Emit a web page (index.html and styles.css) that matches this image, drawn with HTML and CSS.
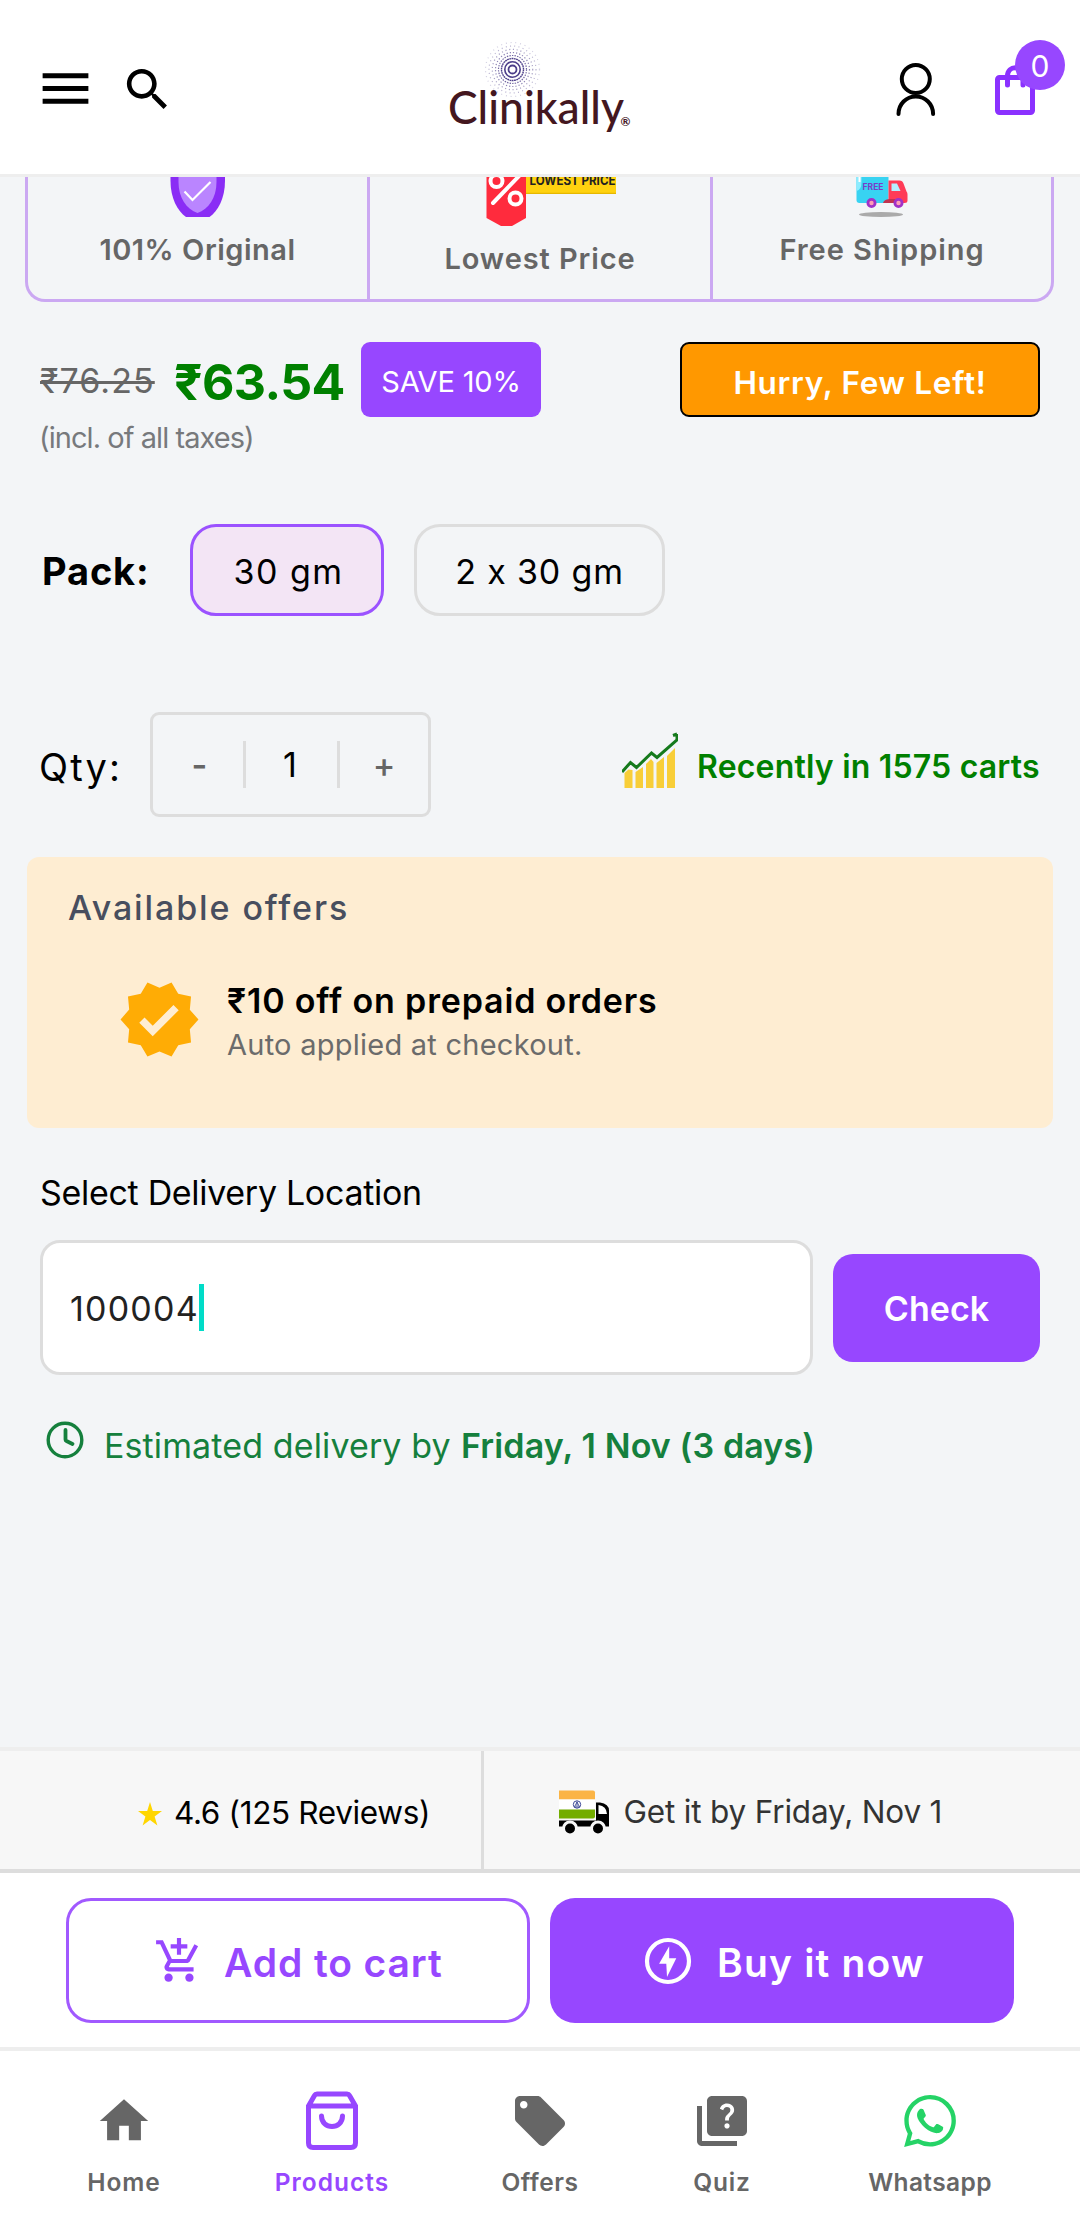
FILE: index.html
```
<!DOCTYPE html>
<html lang="en">
<head>
<meta charset="utf-8">
<title>Clinikally</title>
<link rel="stylesheet" href="styles.css">
</head>
<body>
<header class="header">
  <svg class="menu" width="61" height="61" viewBox="0 0 24 24"><path d="M3 18h18v-2H3v2zm0-5h18v-2H3v2zm0-7v2h18V6H3z"/></svg>
  <svg class="search" width="55" height="55" viewBox="0 0 24 24"><path d="M15.5 14h-.79l-.28-.27C15.41 12.59 16 11.11 16 9.5 16 5.91 13.09 3 9.5 3S3 5.91 3 9.5 5.91 16 9.5 16c1.61 0 3.09-.59 4.23-1.57l.27.28v.79l5 4.99L20.49 19l-4.99-5zm-6 0C7.01 14 5 11.99 5 9.5S7.01 5 9.5 5 14 7.01 14 9.5 11.99 14 9.5 14z"/></svg>
  <svg class="logo" width="190" height="110" viewBox="440 35 190 110">
    <g fill="none" stroke="#4d3f8a">
      <circle cx="512.5" cy="69.5" r="4" stroke-width="1.8"/>
      <circle cx="512.5" cy="69.5" r="7.7" stroke-width="1.6"/>
      <circle cx="512.5" cy="69.5" r="11" stroke-width="1.4" stroke-dasharray="1.8 .5"/>
      <circle cx="512.5" cy="69.5" r="14" stroke-width="1.2" stroke-dasharray="1.4 1.2" opacity=".8"/>
      <circle cx="512.5" cy="69.5" r="17" stroke-width="1.2" stroke-dasharray="1.2 2" opacity=".65"/>
      <circle cx="512.5" cy="69.5" r="20.2" stroke-width="1.2" stroke-dasharray="1.1 2.7" opacity=".5"/>
      <circle cx="512.5" cy="69.5" r="23.5" stroke-width="1.2" stroke-dasharray="1 3.3" opacity=".4"/>
      <circle cx="512.5" cy="69.5" r="27" stroke-width="1.2" stroke-dasharray="1 3.8" opacity=".25"/>
    </g>
    <text class="brand" x="448" y="124" textLength="176" lengthAdjust="spacingAndGlyphs">Clinikally</text>
    <text class="reg" x="620.5" y="125.5">®</text>
  </svg>
  <svg class="user" width="44" height="60" viewBox="893 60 44 60" fill="none" stroke="#000" stroke-width="4" stroke-linecap="round"><circle cx="914.8" cy="79" r="14"/><path d="M897.5 114c0-10 7.800-17.500 17.300-17.500s17.300 7.500 17.300 17.500"/></svg>
  <div class="bag">
    <svg width="44" height="60" viewBox="993 60 44 60" fill="none" stroke="#8b31ff" stroke-width="5" stroke-linecap="round"><rect x="997.500" y="77.500" width="35" height="35" rx="2"/><path d="M1007.500 85v-9c0-11 15.500-11 15.500 0v9"/></svg>
    <span class="count">0</span>
  </div>
</header>

<main class="main">
  <section class="features">
    <div class="feature">
      <svg width="56" height="40" viewBox="171 177 56 40"><path d="M171.500 177h54.500v4c0 17-7 30-15.500 36h-23.500c-8.500-6-15.500-19-15.500-36z" fill="#8a2df5"/><path d="M179.500 177h38v5c0 16-8 27-19 31-11-4-19-15-19-31z" fill="#ba85ff"/><path d="M185.500 191.500l8 8.500 18-18" fill="none" stroke="#fff" stroke-width="2.200"/></svg>
      <p class="f1">101% Original</p>
    </div>
    <div class="feature">
      <svg class="tag" width="132" height="49" viewBox="487 177 132 49"><path d="M527 177h91v17h-91z" fill="#ffd20f"/><path d="M527 192.700h91v1.300h-91z" fill="#e6b800"/><path d="M488.500 177h39.500v41l-14 8h-11l-14.500-8z" fill="#ff2b3d"/><g fill="none" stroke="#fff" stroke-width="4"><circle cx="498.500" cy="181" r="6"/><circle cx="517.500" cy="198.500" r="6"/><path d="M495 203l27-28" stroke-linecap="round"/></g><text class="lowtag" x="531.500" y="184.800" textLength="86" lengthAdjust="spacingAndGlyphs">LOWEST PRICE</text></svg>
      <p class="f2">Lowest Price</p>
    </div>
    <div class="feature">
      <svg class="van" width="54" height="40" viewBox="857 177 54 40"><path d="M858.500 177h32v26h-29q-3 0-3-3z" fill="#38d3f2"/><path d="M858.500 177h5v5q0 8-5 9z" fill="#8cecff"/><path d="M860.500 177h2v5h-2z" fill="#fff"/><path d="M890.500 180.500h11q3 0 4 3l3 8q1 1 1 3v6q0 2.500-3 2.500h-16z" fill="#ff3b57"/><path d="M885 203c1-4 6-4 9-4h4v4z" fill="#c2334f"/><path d="M893.500 183.500h5.500l3.500 7.500h-9z" fill="#b5efff"/><g fill="#ff9eb5" stroke="#a032c8" stroke-width="2.800"><circle cx="873.500" cy="203" r="3.600"/><circle cx="900.500" cy="203" r="3.600"/></g><ellipse cx="883" cy="214.500" rx="22" ry="2.500" fill="#aaa"/><text class="free" x="864.500" y="190" textLength="21">FREE</text></svg>
      <p class="f3">Free Shipping</p>
    </div>
  </section>

  <section class="prices">
    <s class="mrp">₹76.25</s>
    <strong class="price">₹63.54</strong>
    <span class="save">SAVE 10%</span>
    <span class="hurry">Hurry, Few Left!</span>
  </section>
  <p class="tax">(incl. of all taxes)</p>

  <section class="pack">
    <span class="pack-label">Pack:</span>
    <button class="chip chip-on">30 gm</button>
    <button class="chip chip-off">2 x 30 gm</button>
  </section>

  <section class="qty">
    <span class="qty-label">Qty:</span>
    <div class="stepper"><span class="minus">-</span><span class="num">1</span><span class="plus">+</span></div>
    <svg class="trend" width="56" height="57" viewBox="622 731 56 57"><path d="M624.500 773l4-3.500 4 .5v18h-8zM635.500 772l7.500-5v21h-7.500zM646 764l5-5 2.500 3v26H646zM656.500 763l7.500-6v31h-7.500zM667 756l8-8v40h-8z" fill="#f8ce38"/><path d="M622 772l8.500-9.500 6 5 15-14.500 5.500 4.500 20-17.500v-6M673 735.500l4-1.500" fill="none" stroke="#157a1c" stroke-width="3"/></svg>
    <span class="recent">Recently in 1575 carts</span>
  </section>

  <section class="offers">
    <h2>Available offers</h2>
    <div class="offer">
      <svg width="85" height="85" viewBox="0 0 24 24" fill="#ffac05"><path d="M23 12l-2.440-2.780.340-3.680-3.610-.820-1.890-3.180L12 3 8.600 1.540 6.710 4.720l-3.610.810.340 3.680L1 12l2.440 2.780-.340 3.690 3.610.820 1.890 3.180L12 21l3.400 1.460 1.890-3.180 3.610-.820-.340-3.680L23 12zm-12.910 4.720l-3.800-3.810 1.480-1.480 2.320 2.330 5.850-5.870 1.480 1.480-7.330 7.350z"/></svg>
      <div class="offer-text">
        <p class="offer-title">₹10 off on prepaid orders</p>
        <p class="offer-note">Auto applied at checkout.</p>
      </div>
    </div>
  </section>

  <p class="loc">Select Delivery Location</p>
  <section class="pin">
    <div class="pin-input"><span>100004</span><i class="caret"></i></div>
    <button class="check">Check</button>
  </section>
  <section class="eta">
    <svg width="40" height="40" viewBox="0 0 40 40" fill="none" stroke="#15803d" stroke-width="3.400" stroke-linecap="round"><circle cx="20" cy="20" r="16.800"/><path d="M20.500 10v9.500q0 1 1 1.500l6 3" stroke-width="3.800"/></svg>
    <span class="eta-text">Estimated delivery by</span>
    <strong class="eta-date">Friday, 1 Nov (3 days)</strong>
  </section>
</main>

<section class="info">
  <div class="reviews">
    <svg width="24" height="24" viewBox="0 0 24 24" fill="#ffd600"><path d="M12 0l2.800 8.900H24l-7.400 5.600 2.800 9-7.400-5.500-7.400 5.500 2.800-9L0 8.900h9.200z"/></svg>
    <span>4.6 (125 Reviews)</span>
  </div>
  <div class="getby">
    <svg width="51" height="44" viewBox="559 1789.500 51 44"><path d="M559 1790h34q2 0 2 2v7h-36z" fill="#fbb445"/><path d="M559 1799h36v10h-36z" fill="#fff"/><path d="M559 1809h36v7q0 2-2 2h-34z" fill="#73ad00"/><g fill="none" stroke="#3a4796"><circle cx="577" cy="1804" r="3.700"/><path d="M574.500 1806.500l2.500-5 2.500 5zM577 1801v5" stroke-width=".9"/></g><path d="M596 1802h4q9 1.500 9 8v16h-50v-6h37z"/><path d="M598.500 1804.500q8 1 8.500 9h-8.500z" fill="#fff"/><g stroke="#f7f7f7" stroke-width="3"><circle cx="570" cy="1828" r="6.500"/><circle cx="598" cy="1828" r="6.500"/></g></svg>
    <span>Get it by Friday, Nov 1</span>
  </div>
</section>

<section class="actions">
  <button class="add">
    <svg width="50" height="50" viewBox="0 0 24 24" fill="#9747ff"><path d="M11 9h2V6h3V4h-3V1h-2v3H8v2h3v3zm-4 9c-1.100 0-1.990.900-1.990 2S5.900 22 7 22s2-.900 2-2-.900-2-2-2zm10 0c-1.100 0-1.990.900-1.990 2s.890 2 1.990 2 2-.900 2-2-.900-2-2-2zm-9.830-3.250l.030-.120.900-1.630h7.450c.750 0 1.410-.410 1.750-1.030l3.860-7.010L19.420 4h-.010l-1.100 2-2.760 5H8.530l-.130-.270L6.160 6l-.950-2-.940-2H1v2h2l3.600 7.590-1.350 2.450c-.160.280-.250.610-.250.960 0 1.100.900 2 2 2h12v-2H7.420c-.130 0-.250-.110-.250-.250z"/></svg>
    <span>Add to cart</span>
  </button>
  <button class="buy">
    <svg width="48" height="48" viewBox="-24 -24 48 48"><circle r="21" fill="none" stroke="#fff" stroke-width="4.200"/><path d="M1.200-14.800L-8.900 2.700h7.200L-1 16 8.300-2.700H1.200z" fill="#fff"/></svg>
    <span>Buy it now</span>
  </button>
</section>

<nav class="nav">
  <a class="home"><svg width="58" height="60" viewBox="0 0 24 24"><path d="M10 20v-6h4v6h5v-8h3L12 3 2 12h3v8z"/></svg><span>Home</span></a>
  <a class="products"><svg width="58" height="60" viewBox="303 2090 58 60" fill="none" stroke="#9747ff" stroke-width="5"><path d="M308.500 2105l6-10.500q.8-1.500 2.500-1.500h30q1.700 0 2.500 1.500l6 10.500v37q0 4.500-4.500 4.500h-38q-4.500 0-4.500-4.500zM308.500 2105h47"/><path d="M321.500 2115c0 14 21 14 21 0" stroke-linecap="round"/></svg><span>Products</span></a>
  <a class="deals"><svg width="60" height="60" viewBox="0 0 24 24"><path d="M21.410 11.580l-9-9C12.050 2.220 11.550 2 11 2H4c-1.100 0-2 .900-2 2v7c0 .550.220 1.050.590 1.420l9 9c.360.360.860.580 1.410.580.550 0 1.050-.220 1.410-.590l7-7c.370-.360.590-.860.590-1.410 0-.550-.230-1.060-.590-1.420zM5.500 7C4.670 7 4 6.330 4 5.500S4.670 4 5.500 4 7 4.670 7 5.500 6.330 7 5.500 7z"/></svg><span>Offers</span></a>
  <a class="quiz"><svg width="60" height="60" viewBox="0 0 24 24"><path d="M4 6H2v14c0 1.100.900 2 2 2h14v-2H4V6z"/><path d="M20 2H8c-1.100 0-2 .900-2 2v12c0 1.100.900 2 2 2h12c1.100 0 2-.900 2-2V4c0-1.100-.900-2-2-2zm-5.990 13c-.590 0-1.050-.470-1.050-1.050 0-.590.470-1.040 1.050-1.040.590 0 1.040.450 1.040 1.040-.010.580-.450 1.050-1.040 1.050zm2.500-6.170c-.630.930-1.230 1.210-1.560 1.810-.130.240-.180.400-.180 1.180h-1.520c0-.410-.060-1.080.260-1.650.410-.730 1.180-1.160 1.630-1.800.480-.680.210-1.940-1.140-1.940-.880 0-1.320.670-1.500 1.230l-1.370-.570C11.510 5.960 12.520 5 13.990 5c1.230 0 2.080.560 2.510 1.260.370.610.580 1.730.010 2.570z"/></svg><span>Quiz</span></a>
  <a class="chat"><svg width="52" height="60" viewBox="0 0 24 24"><path fill="#25d366" d="M17.472 14.382c-.297-.149-1.758-.867-2.030-.967-.273-.099-.471-.148-.670.150-.197.297-.767.966-.940 1.164-.173.199-.347.223-.644.075-.297-.150-1.255-.463-2.390-1.475-.883-.788-1.480-1.761-1.653-2.059-.173-.297-.018-.458.130-.606.134-.133.298-.347.446-.520.149-.174.198-.298.298-.497.099-.198.050-.371-.025-.520-.075-.149-.669-1.612-.916-2.207-.242-.579-.487-.500-.669-.510-.173-.008-.371-.010-.570-.010-.198 0-.520.074-.792.372-.272.297-1.040 1.016-1.040 2.479 0 1.462 1.065 2.875 1.213 3.074.149.198 2.096 3.200 5.077 4.487.709.306 1.262.489 1.694.625.712.227 1.360.195 1.871.118.571-.085 1.758-.719 2.006-1.413.248-.694.248-1.289.173-1.413-.074-.124-.272-.198-.570-.347m-5.421 7.403h-.004a9.870 9.870 0 01-5.031-1.378l-.361-.214-3.741.982.998-3.648-.235-.374a9.860 9.860 0 01-1.510-5.260c.001-5.450 4.436-9.884 9.888-9.884 2.640 0 5.122 1.030 6.988 2.898a9.825 9.825 0 012.893 6.994c-.003 5.450-4.437 9.884-9.885 9.884m8.413-18.297A11.815 11.815 0 0012.050 0C5.495 0 .160 5.335.157 11.892c0 2.096.547 4.142 1.588 5.945L.057 24l6.305-1.654a11.882 11.882 0 005.683 1.448h.005c6.554 0 11.890-5.335 11.893-11.893a11.821 11.821 0 00-3.480-8.413z"/></svg><span>Whatsapp</span></a>
</nav>
</body>
</html>
```
FILE: styles.css
```
* { box-sizing: border-box; margin: 0; padding: 0; }
body { width: 1080px; background: #f3f5f7; color: #000; font-family: Inter, "Noto Sans", sans-serif; white-space: nowrap; }
button { font: inherit; border: 0; background: none; color: inherit; }
svg { display: block; flex: none; }

.header { height: 177px; background: #fff; border-bottom: 3px solid #eee; display: flex; align-items: center; padding: 0 42px 0 35px; }
.menu { margin-top: 3px; }
.search { margin: 5px 0 0 24px; }
.logo { margin: 6px 0 0 265px; overflow: visible; }
.brand { font: 500 47px Lato, sans-serif; fill: #44171f; }
.reg { font: 700 12px Lato, sans-serif; fill: #44171f; }
.user { margin: 6px 0 0 264px; }
.bag { position: relative; margin: 6px 0 0 55px; }
.count { position: absolute; left: 22px; top: -20px; width: 50px; height: 50px; border-radius: 50%; background: #9747ff; color: #fff; font-size: 30px; line-height: 53px; text-align: center; }

.main { height: 1570px; overflow: hidden; }
.features { display: grid; grid-template-columns: 339px 343px 341px; width: 1029px; height: 125px; margin-left: 25px; border: 3px solid #cba8f2; border-top: 0; border-radius: 0 0 20px 20px; }
.feature { display: flex; flex-direction: column; align-items: center; color: #666; font-size: 29px; font-weight: 600; line-height: 36px; }
.feature + .feature { border-left: 3px solid #cba8f2; }
.tag { margin-left: 22px; }
.van { margin-left: 0; }
.f1 { margin-top: 15px; letter-spacing: .51px; }
.f2 { margin-top: 15px; letter-spacing: .9px; }
.f3 { margin-top: 15px; letter-spacing: .95px; }
.lowtag { font: 700 13px Inter, sans-serif; fill: #222; }
.free { font: 700 8.5px Inter, sans-serif; fill: #7a3cc8; }

.prices { display: flex; align-items: center; height: 75px; margin: 40px 40px 0; }
.mrp { width: 134px; color: #666; font-size: 34px; letter-spacing: 1.08px; padding-top: 1px; text-decoration-thickness: 2.5px; }
.price { width: 187px; color: green; font-size: 50px; font-weight: 700; letter-spacing: -.6px; padding-top: 4px; }
.save { width: 180px; height: 75px; border-radius: 9px; background: #9747ff; color: #fff; font-size: 29px; letter-spacing: -.15px; line-height: 79px; text-align: center; }
.hurry { margin-left: auto; width: 360px; height: 75px; border: 2.5px solid #000; border-radius: 9px; background: #ff9800; color: #fff; font-size: 31.5px; font-weight: 600; letter-spacing: .7px; line-height: 77px; text-align: center; }
.tax { margin: 4px 0 0 39px; color: #77797c; font-size: 29px; letter-spacing: -.94px; line-height: 34px; }

.pack { display: flex; align-items: center; height: 92px; margin: 69px 0 0 42px; }
.pack-label { width: 148px; font-size: 38px; font-weight: 700; letter-spacing: .85px; padding-top: 2px; }
.chip { height: 92px; border: 3px solid #ddd; border-radius: 26px; font-size: 34px; padding-top: 2px; }
.chip-on { width: 194px; border-color: #9b52ff; background: #f3e5f5; letter-spacing: 1.5px; padding-left: 3px; }
.chip-off { width: 251px; margin-left: 30px; letter-spacing: .84px; }

.qty { display: flex; align-items: center; height: 105px; margin: 96px 0 0 39px; }
.qty-label { width: 111px; font-size: 38px; letter-spacing: 2.1px; padding-top: 4px; }
.stepper { display: grid; grid-template-columns: 90px 94px 1fr; align-items: center; width: 281px; height: 105px; border: 3px solid #ddd; border-radius: 9px; font-size: 34px; text-align: center; line-height: 47px; }
.stepper span + span { border-left: 3px solid #ddd; }
.minus { color: #666; font-weight: 600; padding-left: 3px; }
.num { padding-right: 3px; }
.plus { color: #666; font-weight: 500; }
.trend { margin: -11px 0 0 191px; }
.recent { margin-left: 19px; padding-top: 4px; color: green; font-size: 32px; font-weight: 600; letter-spacing: .19px; }

.offers { width: 1026px; height: 271px; margin: 40px 0 0 27px; padding: 31px 41px 0; border-radius: 12px; background: #feedd2; }
.offers h2 { color: #484e5e; font-size: 34px; font-weight: 500; letter-spacing: 1.89px; line-height: 40px; }
.offer { display: flex; align-items: center; height: 85px; margin: 49px 0 0 49px; }
.offer-text { padding: 7px 0 0 25px; }
.offer-title { font-size: 34px; font-weight: 600; letter-spacing: .84px; line-height: 44px; }
.offer-note { color: #6b6b6b; font-size: 29px; letter-spacing: .25px; line-height: 44px; }

.loc { margin: 45px 0 0 40px; font-size: 34px; letter-spacing: -.31px; line-height: 39px; }
.pin { display: flex; align-items: center; justify-content: space-between; height: 135px; margin: 28px 40px 0; }
.pin-input { display: flex; align-items: center; width: 773px; height: 135px; padding-left: 27px; border: 3px solid #ddd; border-radius: 20px; background: #fff; color: #222; font-size: 34px; letter-spacing: 1.2px; }
.pin-input span { padding-top: 2px; }
.caret { width: 5px; height: 47px; background: #00dcc8; }
.check { width: 207px; height: 108px; padding-top: 2px; border-radius: 20px; background: #9747ff; color: #fff; font-size: 34px; font-weight: 600; letter-spacing: .05px; }
.eta { display: flex; align-items: center; height: 51px; margin: 45px 0 0 45px; color: #15803d; font-size: 34px; }
.eta svg { margin-top: -12px; }
.eta-text { width: 357px; margin-left: 19px; letter-spacing: .12px; }
.eta-date { font-weight: 600; letter-spacing: .13px; }

.info { display: flex; height: 126px; border-top: 4px solid #eee; border-bottom: 4px solid #ddd; background: #f7f7f7; font-size: 31.5px; }
.reviews { display: flex; align-items: center; width: 484px; padding-left: 138px; border-right: 3px solid #ddd; letter-spacing: -.35px; }
.reviews svg { margin-top: 8px; }
.reviews span { margin: 5px 0 0 12px; }
.getby { display: flex; align-items: center; padding-left: 75px; color: #333; letter-spacing: -.18px; }
.getby svg { margin-top: 3px; }
.getby span { margin: 3px 0 0 13.5px; }

.actions { display: flex; gap: 20px; height: 174px; padding: 25px 66px 0; background: #fff; }
.actions button { display: flex; align-items: center; width: 464px; height: 125px; border-radius: 25px; font-size: 39px; font-weight: 600; }
.actions span { padding-top: 3px; }
.actions .add { border: 3px solid #a159ff; color: #9747ff; padding-left: 85px; letter-spacing: .9px; }
.add span { margin-left: 20px; }
.buy { background: #9747ff; color: #fff; padding-left: 94px; letter-spacing: 1.2px; }
.buy span { margin-left: 25px; }

.nav { display: flex; height: 181px; padding: 40px 0 0 84px; border-top: 4px solid #eee; background: #fff; color: #666; font-size: 24.5px; font-weight: 600; }
.nav a { display: flex; flex-direction: column; align-items: center; width: 80px; fill: #666; line-height: 30px; }
.nav a span { margin-top: 16px; }
.nav .home { letter-spacing: .92px; }
.nav .products { width: 118px; margin-left: 109px; color: #9747ff; letter-spacing: 1.01px; }
.nav .deals { margin-left: 109px; letter-spacing: .5px; }
.nav .quiz { width: 62px; margin-left: 111px; letter-spacing: .88px; }
.nav .chat { width: 126px; margin-left: 114px; letter-spacing: .38px; }
```
